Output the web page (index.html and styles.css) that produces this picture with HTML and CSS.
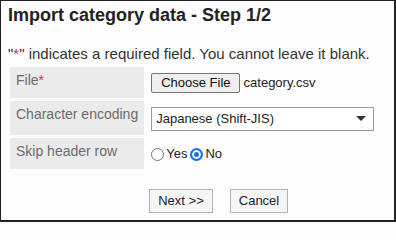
FILE: index.html
```html
<!DOCTYPE html>
<html>
<head>
<meta charset="utf-8">
<link rel="stylesheet" href="styles.css">
</head>
<body>
<div class="frame">
  <h1 class="title">Import category data - Step 1/2</h1>
  <p class="note">"<span class="req">*</span>" indicates a required field. You cannot leave it blank.</p>
  <table class="form">
    <tr class="r1">
      <th>File<span class="req">*</span></th>
      <td><div class="val"><span class="btn-file">Choose File</span><span class="fname">category.csv</span></div></td>
    </tr>
    <tr class="r2">
      <th>Character encoding</th>
      <td><div class="select"><span>Japanese (Shift-JIS)</span><span class="arrow"></span></div></td>
    </tr>
    <tr class="r3">
      <th>Skip header row</th>
      <td><div class="val"><span class="radio"></span><span class="opt">Yes</span><span class="radio on"></span><span class="opt">No</span></div></td>
    </tr>
  </table>
  <div class="actions">
    <span class="btn next">Next &gt;&gt;</span>
    <span class="btn cancel">Cancel</span>
  </div>
</div>
</body>
</html>
```

FILE: styles.css
```css
html, body {
  margin: 0;
  padding: 0;
  background: #fdfdfd;
}
.frame {
  box-sizing: border-box;
  width: 396px;
  height: 222px;
  border-style: solid;
  border-color: #222;
  border-width: 1px 2px 2px 1px;
  background: #fdfdfd;
  font-family: "Liberation Sans", Arial, sans-serif;
  color: #333;
  padding: 0 0 0 6px;
  overflow: hidden;
}
.title {
  margin: 0 0 0 1px;
  padding-top: 3px;
  font-size: 18px;
  line-height: 22px;
  font-weight: bold;
  color: #222;
  white-space: nowrap;
}
.note {
  margin: 19px 0 0 1px;
  font-size: 15px;
  line-height: 17px;
  color: #333;
  white-space: nowrap;
}
.req { color: #e0303c; }
.form {
  margin-top: 2px;
  border-collapse: separate;
  border-spacing: 3px 3px;
}
.form th {
  width: 120px;
  background: #ebebeb;
  color: #6b6b6b;
  font-weight: normal;
  font-size: 14px;
  line-height: 16px;
  text-align: left;
  vertical-align: top;
  padding: 5px 6px 0 6px;
  white-space: nowrap;
}
.r1 th { height: 26px; }
.r2 th { height: 29px; }
.r3 th { height: 26px; }
.form td {
  padding: 0 0 0 4px;
  vertical-align: middle;
  color: #222;
  font-size: 13px;
}
.val {
  display: flex;
  align-items: center;
  white-space: nowrap;
}
.btn-file {
  box-sizing: border-box;
  height: 20px;
  line-height: 18px;
  padding: 0 8px 0 9px;
  border: 1px solid #767676;
  border-radius: 2px;
  background: #efefef;
  color: #111;
}
.fname { margin-left: 4px; }
.select {
  box-sizing: border-box;
  width: 223px;
  height: 24px;
  margin-top: 1px;
  border: 1px solid #999;
  background: #fff;
  display: flex;
  align-items: center;
  justify-content: space-between;
  padding: 0 7px 0 4px;
}
.arrow {
  width: 0;
  height: 0;
  border-left: 5px solid transparent;
  border-right: 5px solid transparent;
  border-top: 5px solid #333;
}
.radio {
  box-sizing: border-box;
  width: 13px;
  height: 13px;
  border-radius: 50%;
  border: 1px solid #767676;
  background: #fff;
  margin: 1px 2px 0 0;
}
.radio.on {
  border: 2px solid #1a6fe6;
  box-shadow: inset 0 0 0 2px #fff;
  background: #1a6fe6;
  margin-left: 3px;
}
.opt { line-height: 16px; }
.actions {
  display: flex;
  gap: 17px;
  margin: 17px 0 0 142px;
}
.btn {
  box-sizing: border-box;
  height: 24px;
  line-height: 22px;
  border: 1px solid #b3b3b3;
  background: #f6f6f6;
  font-size: 13px;
  color: #222;
  text-align: center;
  white-space: nowrap;
}
.next { width: 64px; }
.cancel { width: 58px; }
```
